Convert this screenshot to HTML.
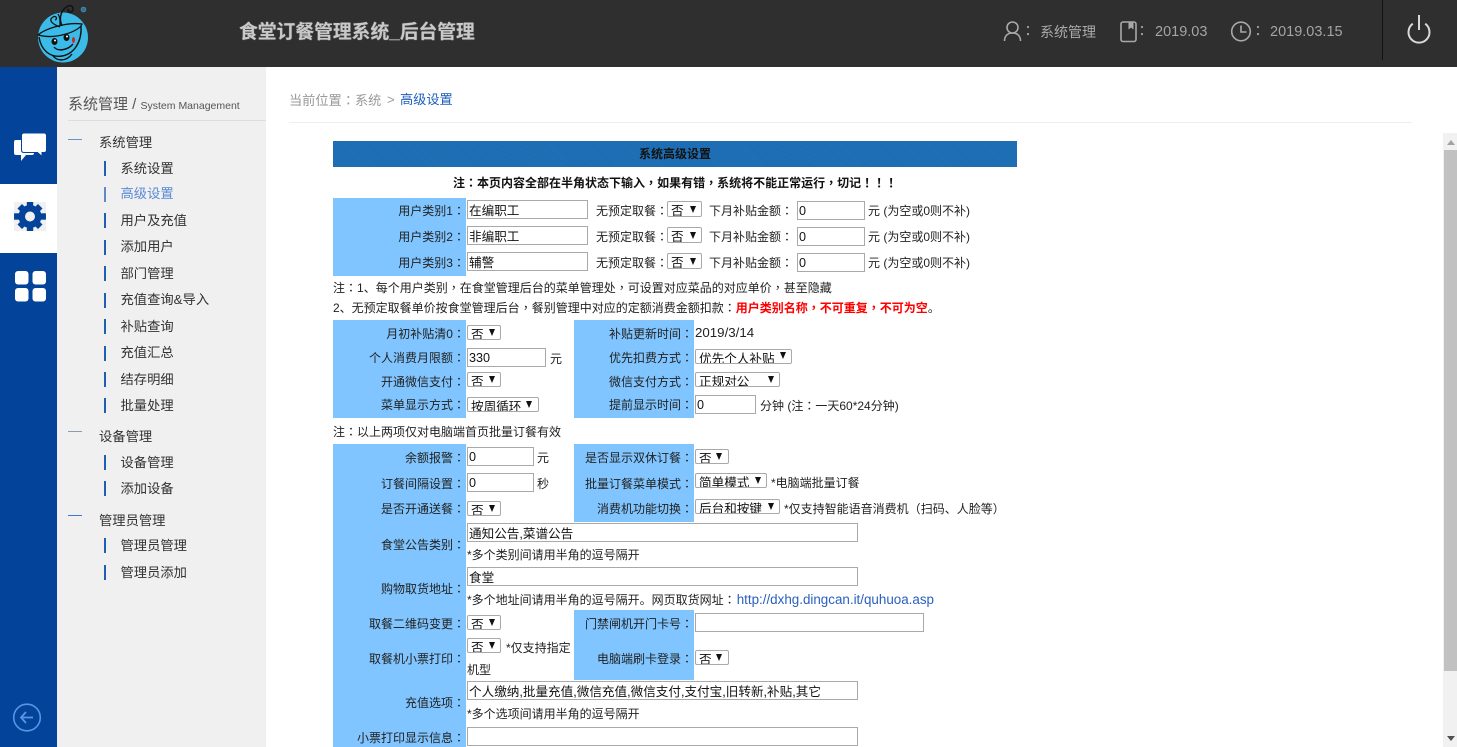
<!DOCTYPE html>
<html>
<head>
<meta charset="utf-8">
<title>食堂订餐管理系统_后台管理</title>
<style>
html,body{margin:0;padding:0;width:1457px;height:747px;overflow:hidden;background:#fff}
body{position:relative;font-family:"Liberation Sans","Noto Sans CJK SC",sans-serif;font-size:12px;color:#222}
s{text-decoration:none;font-family:"Noto Sans CJK TC",sans-serif}
.a{position:absolute}
.t{position:absolute;white-space:nowrap;line-height:16px;font-size:12px;margin-top:1px}
.r{position:absolute;white-space:nowrap;line-height:16px;font-size:12px;text-align:right;width:160px;margin-top:1px}
.p{position:absolute;background:#80c5ff}
input{position:absolute;box-sizing:border-box;border:1px solid #a9a9a9;padding:0 1px;margin:0;background:#fff;height:19px;font:12.6px "Liberation Sans","Noto Sans CJK SC",sans-serif;color:#111;outline:0;border-radius:0}
select{position:absolute;box-sizing:border-box;-webkit-appearance:none;appearance:none;border:1px solid #a9a9a9;border-radius:2px;padding:2px 0 0 3px;margin:0;background:transparent;height:15px;line-height:15px;font:12.6px "Liberation Sans","Noto Sans CJK SC",sans-serif;color:#111;outline:0}
.ar{position:absolute;width:0;height:0;border-left:3.5px solid transparent;border-right:3.5px solid transparent;border-top:7px solid #111}
.m1{position:absolute;left:99px;font-size:13.3px;line-height:18px;color:#333;white-space:nowrap;margin-top:1px}
.m2{position:absolute;left:120.5px;font-size:13.3px;line-height:18px;color:#333;white-space:nowrap;margin-top:1px}
.bar{position:absolute;left:104px;width:2px;height:15px;background:#1f5fb0}
.dash{position:absolute;left:68px;width:14px;height:1px;background:#6a90c8}
</style>
</head>
<body>
<!-- header -->
<div class="a" style="left:0;top:0;width:1457px;height:67px;background:#2f2f2f"></div>
<svg class="a" style="left:0;top:0" width="110" height="67" viewBox="0 0 110 67" fill="none">
<circle cx="63" cy="37.5" r="25" fill="#3bbce8"/>
<path d="M38 35C46 28 68 22 82 24C80 31 56 40 38 35Z" stroke="#111" stroke-width="1.300"/>
<path d="M39 37C41 50 50 58 62 56C74 54 82 42 81 26" stroke="#111" stroke-width="1.400"/>
<path d="M53 56C57 61 66 62 72 54" stroke="#111" stroke-width="1.400"/>
<path d="M60 27C52 24 48 20 53 17C56 15 58 19 55 20" stroke="#111" stroke-width="1.300"/>
<path d="M62 26C58 17 62 9 68 6C73 4 75 10 71 12C68 13 67 10 69 9" stroke="#111" stroke-width="1.500"/>
<path d="M60 25C60 20 60 17 58 14" stroke="#111" stroke-width="1.200"/>
<ellipse cx="54.500" cy="41.500" rx="3" ry="3.500" fill="#111"/>
<ellipse cx="66.500" cy="37.500" rx="3" ry="3.500" fill="#111"/>
<circle cx="55" cy="40.500" r="1" fill="#fff"/><circle cx="67" cy="36.500" r="1" fill="#fff"/>
<path d="M54 47C58 52 68 50 73 44" stroke="#111" stroke-width="1.400"/>
<ellipse cx="73.500" cy="40" rx="1.500" ry="3" fill="#d3212a"/>
<circle cx="83.500" cy="9.500" r="2.300" fill="#2f6f8c" stroke="#3d8db0" stroke-width="1"/>
</svg>
<div class="a" style="left:239px;top:18px;font-size:18.800px;line-height:28px;font-weight:bold;color:#c9c9c9;white-space:nowrap;text-shadow:0 0 1px #888">食堂订餐管理系统_后台管理</div>
<svg class="a" style="left:1000px;top:15px" width="440" height="34" viewBox="1000 15 440 34" fill="none" stroke="#a8a8a8" stroke-width="1.600">
<circle cx="1012.500" cy="27.500" r="5.500"/>
<path d="M1004.500 41C1004.500 35.500 1008 33 1012.500 33C1017 33 1020.500 35.500 1020.500 41"/>
<rect x="1121" y="22" width="15" height="19.500" rx="2"/>
<path d="M1129 22V28.500L1131 27L1133 28.500V22" fill="#a8a8a8" stroke-width="1"/>
<circle cx="1241" cy="31.500" r="9.300"/>
<path d="M1241 25.500V32H1246.500"/>
<path d="M1412.800 23.700A10.500 10.500 0 1 0 1425.200 23.700" stroke="#d8d8d8" stroke-width="2"/>
<path d="M1419 15V30" stroke="#d8d8d8" stroke-width="2"/>
</svg>
<div class="a" style="left:1382px;top:0;width:1px;height:60px;background:#111"></div>
<div class="t" style="left:1021px;top:22px;font-size:14px;color:#aaa"><s>：</s></div>
<div class="t" style="left:1040px;top:23px;font-size:14px;color:#aaa">系统管理</div>
<div class="t" style="left:1135px;top:22px;font-size:14px;color:#aaa"><s>：</s></div>
<div class="t" style="left:1155px;top:23px;font-size:14.500px;color:#a4a4a4">2019.03</div>
<div class="t" style="left:1251px;top:22px;font-size:14px;color:#aaa"><s>：</s></div>
<div class="t" style="left:1270px;top:23px;font-size:14.500px;color:#a4a4a4">2019.03.15</div>

<!-- left rail -->
<div class="a" style="left:0;top:67px;width:57px;height:680px;background:#03439a"></div>
<div class="a" style="left:0;top:184px;width:57px;height:69px;background:#fff"></div>
<svg class="a" style="left:0;top:67px" width="57" height="680" viewBox="0 67 57 680">
<path d="M16 140H32Q34 140 34 142V153Q34 155 32 155H26L21 161V155H16Q14 155 14 153V142Q14 140 16 140Z" fill="#fff"/>
<path d="M24 133H44Q46.500 133 46.500 135.500V150Q46.500 152.500 44 152.500H42V156.500L37.500 152.500H24Q21.500 152.500 21.500 150V135.500Q21.500 133 24 133Z" fill="#fff" stroke="#03439a" stroke-width="1"/>
<rect x="14" y="202" width="32" height="29" fill="#f0f0f0"/>
<g fill="#03439a" transform="translate(30 216.500)">
<circle r="11.500"/>
<rect x="-3.200" y="-14.500" width="6.400" height="29"/>
<rect x="-3.200" y="-14.500" width="6.400" height="29" transform="rotate(45)"/>
<rect x="-3.200" y="-14.500" width="6.400" height="29" transform="rotate(90) scale(1 1.100)"/>
<rect x="-3.200" y="-14.500" width="6.400" height="29" transform="rotate(135)"/>
<circle r="5" fill="#f0f0f0"/>
</g>
<rect x="15" y="271" width="13.500" height="13.500" rx="3" fill="#fff"/>
<rect x="32.500" y="271" width="13.500" height="13.500" rx="3" fill="#fff"/>
<rect x="15" y="288" width="13.500" height="13.500" rx="3" fill="#fff"/>
<rect x="32.500" y="288" width="13.500" height="13.500" rx="3" fill="#fff"/>
<circle cx="27" cy="717.500" r="13.300" fill="none" stroke="#5a95e5" stroke-width="1.600"/>
<path d="M33 717.500H21M26 712L21 717.500L26 723" fill="none" stroke="#5a95e5" stroke-width="1.800"/>
</svg>

<!-- side menu -->
<div class="a" style="left:57px;top:67px;width:209px;height:680px;background:#f0f0f0"></div>
<div class="a" style="left:68px;top:94px;font-size:15px;line-height:22px;color:#555;white-space:nowrap">系统管理 <span style="font-size:15px">/</span> <span style="font-size:10.500px">System Management</span></div>
<div class="a" style="left:68px;top:120px;width:198px;height:1px;background:#ddd"></div>

<div class="dash" style="top:139px"></div><div class="m1" style="top:133px">系统管理</div>
<div class="bar" style="top:161px"></div><div class="m2" style="top:159px">系统设置</div>
<div class="bar" style="top:187px;opacity:.7"></div><div class="m2" style="top:184px;color:#5b8bd6">高级设置</div>
<div class="bar" style="top:213px"></div><div class="m2" style="top:211px">用户及充值</div>
<div class="bar" style="top:240px"></div><div class="m2" style="top:237px">添加用户</div>
<div class="bar" style="top:266px"></div><div class="m2" style="top:264px">部门管理</div>
<div class="bar" style="top:293px"></div><div class="m2" style="top:290px">充值查询&amp;导入</div>
<div class="bar" style="top:319px"></div><div class="m2" style="top:317px">补贴查询</div>
<div class="bar" style="top:346px"></div><div class="m2" style="top:343px">充值汇总</div>
<div class="bar" style="top:372px"></div><div class="m2" style="top:370px">结存明细</div>
<div class="bar" style="top:398px"></div><div class="m2" style="top:396px">批量处理</div>
<div class="dash" style="top:431px;background:#8d9bb0"></div><div class="m1" style="top:427px">设备管理</div>
<div class="bar" style="top:455px"></div><div class="m2" style="top:453px">设备管理</div>
<div class="bar" style="top:481px"></div><div class="m2" style="top:479px">添加设备</div>
<div class="dash" style="top:515px;background:#3f78c8"></div><div class="m1" style="top:511px">管理员管理</div>
<div class="bar" style="top:538px"></div><div class="m2" style="top:536px">管理员管理</div>
<div class="bar" style="top:565px"></div><div class="m2" style="top:563px">管理员添加</div>

<!-- breadcrumb -->
<div class="a" style="left:289px;top:91px;font-size:13.200px;line-height:18px;color:#999;white-space:nowrap">当前位置<s>：</s>系统</div>
<div class="a" style="left:387px;top:91px;font-size:13.200px;line-height:18px;color:#999">&gt;</div>
<div class="a" style="left:400px;top:91px;font-size:13.200px;line-height:18px;color:#1d5fbb;white-space:nowrap">高级设置</div>
<div class="a" style="left:289px;top:122px;width:1123px;height:1px;background:#eee"></div>

<!-- scrollbar -->
<div class="a" style="left:1443px;top:133px;width:14px;height:614px;background:#f1f1f1"></div>
<div class="a" style="left:1444px;top:150px;width:13px;height:521px;background:#c1c1c1"></div>
<div class="a" style="left:1447px;top:140px;width:0;height:0;border-left:4px solid transparent;border-right:4px solid transparent;border-bottom:5px solid #a3a3a3"></div>
<div class="a" style="left:1447px;top:736px;width:0;height:0;border-left:4px solid transparent;border-right:4px solid transparent;border-top:5px solid #505050"></div>

<!-- form header -->
<div class="a" style="left:333px;top:141px;width:684px;height:26px;background-color:#186ab2;background-image:repeating-linear-gradient(45deg,rgba(255,255,255,.05) 0 1px,transparent 1px 2px)"></div>
<div class="t" style="left:639px;top:145px;font-weight:bold;color:#111">系统高级设置</div>
<div class="t" style="left:453px;top:174px;font-weight:bold;color:#111">注<s>：</s>本页内容全部在半角状态下输入<s>，</s>如果有错<s>，</s>系统将不能正常运行<s>，</s>切记<s>！！！</s></div>

<!-- blue panels -->
<div class="p" style="left:333px;top:198px;width:133px;height:78px"></div>
<div class="p" style="left:333px;top:320px;width:133px;height:98px"></div>
<div class="p" style="left:574px;top:320px;width:120px;height:98px"></div>
<div class="p" style="left:333px;top:444px;width:133px;height:303px"></div>
<div class="p" style="left:574px;top:444px;width:120px;height:78px"></div>
<div class="p" style="left:574px;top:610px;width:120px;height:70px"></div>

<!-- user types -->
<div class="r" style="left:305px;top:202px">用户类别1<s>：</s></div>
<div class="r" style="left:305px;top:228px">用户类别2<s>：</s></div>
<div class="r" style="left:305px;top:254px">用户类别3<s>：</s></div>
<input style="left:467px;top:200px;width:121px" value="在编职工">
<input style="left:467px;top:226px;width:121px" value="非编职工">
<input style="left:467px;top:252px;width:121px" value="辅警">
<div class="t" style="left:596px;top:202px">无预定取餐<s>：</s></div>
<div class="t" style="left:596px;top:228px">无预定取餐<s>：</s></div>
<div class="t" style="left:596px;top:254px">无预定取餐<s>：</s></div>
<select style="left:667px;top:201px;width:35px;height:16px"><option>否</option></select><i class="ar" style="left:690px;top:206px"></i>
<select style="left:667px;top:227px;width:35px;height:16px"><option>否</option></select><i class="ar" style="left:690px;top:232px"></i>
<select style="left:667px;top:253px;width:35px;height:16px"><option>否</option></select><i class="ar" style="left:690px;top:258px"></i>
<div class="t" style="left:709px;top:202px">下月补贴金额<s>：</s></div>
<div class="t" style="left:709px;top:228px">下月补贴金额<s>：</s></div>
<div class="t" style="left:709px;top:254px">下月补贴金额<s>：</s></div>
<input style="left:797px;top:201px;width:68px" value="0">
<input style="left:797px;top:227px;width:68px" value="0">
<input style="left:797px;top:253px;width:68px" value="0">
<div class="t" style="left:868px;top:202px">元 (为空或0则不补)</div>
<div class="t" style="left:868px;top:228px">元 (为空或0则不补)</div>
<div class="t" style="left:868px;top:254px">元 (为空或0则不补)</div>
<div class="t" style="left:333px;top:279px">注<s>：</s>1、每个用户类别<s>，</s>在食堂管理后台的菜单管理处<s>，</s>可设置对应菜品的对应单价<s>，</s>甚至隐藏</div>
<div class="t" style="left:333px;top:299px">2、无预定取餐单价按食堂管理后台<s>，</s>餐别管理中对应的定额消费金额扣款<s>：</s><b style="color:#f00">用户类别名称<s>，</s>不可重复<s>，</s>不可为空</b>。</div>

<!-- panel 2 -->
<div class="r" style="left:305px;top:325px">月初补贴清0<s>：</s></div>
<div class="r" style="left:305px;top:349px">个人消费月限额<s>：</s></div>
<div class="r" style="left:305px;top:373px">开通微信支付<s>：</s></div>
<div class="r" style="left:305px;top:396px">菜单显示方式<s>：</s></div>
<select style="left:467px;top:325px;width:34px"><option>否</option></select><i class="ar" style="left:489px;top:329px"></i>
<input style="left:467px;top:348px;width:79px" value="330">
<div class="t" style="left:550px;top:350px">元</div>
<select style="left:467px;top:372px;width:34px"><option>否</option></select><i class="ar" style="left:489px;top:376px"></i>
<select style="left:467px;top:397px;width:72px"><option>按周循环</option></select><i class="ar" style="left:526px;top:401px"></i>
<div class="r" style="left:533px;top:325px">补贴更新时间<s>：</s></div>
<div class="r" style="left:533px;top:349px">优先扣费方式<s>：</s></div>
<div class="r" style="left:533px;top:373px">微信支付方式<s>：</s></div>
<div class="r" style="left:533px;top:396px">提前显示时间<s>：</s></div>
<div class="t" style="left:695px;top:324px;font-size:13.300px">2019/3/14</div>
<select style="left:695px;top:349px;width:97px"><option>优先个人补贴</option></select><i class="ar" style="left:780px;top:352px"></i>
<select style="left:695px;top:372px;width:85px"><option>正规对公</option></select><i class="ar" style="left:768px;top:376px"></i>
<input style="left:695px;top:395px;width:61px" value="0">
<div class="t" style="left:760px;top:397px">分钟 (注<s>：</s>一天60*24分钟)</div>
<div class="t" style="left:333px;top:423px">注<s>：</s>以上两项仅对电脑端首页批量订餐有效</div>

<!-- panel 3 -->
<div class="r" style="left:305px;top:449px">余额报警<s>：</s></div>
<div class="r" style="left:305px;top:475px">订餐间隔设置<s>：</s></div>
<div class="r" style="left:305px;top:500px">是否开通送餐<s>：</s></div>
<input style="left:467px;top:447px;width:67px" value="0">
<div class="t" style="left:537px;top:449px">元</div>
<input style="left:467px;top:473px;width:67px" value="0">
<div class="t" style="left:537px;top:475px">秒</div>
<select style="left:467px;top:501px;width:34px"><option>否</option></select><i class="ar" style="left:489px;top:505px"></i>
<div class="r" style="left:533px;top:449px">是否显示双休订餐<s>：</s></div>
<div class="r" style="left:533px;top:475px">批量订餐菜单模式<s>：</s></div>
<div class="r" style="left:533px;top:500px">消费机功能切换<s>：</s></div>
<select style="left:695px;top:449px;width:34px"><option>否</option></select><i class="ar" style="left:716px;top:453px"></i>
<select style="left:695px;top:473px;width:72px"><option>简单模式</option></select><i class="ar" style="left:755px;top:477px"></i>
<div class="t" style="left:771px;top:474px">*电脑端批量订餐</div>
<select style="left:695px;top:499px;width:85px"><option>后台和按键</option></select><i class="ar" style="left:768px;top:503px"></i>
<div class="t" style="left:784px;top:500px">*仅支持智能语音消费机<s>（</s>扫码、人脸等<s>）</s></div>

<div class="r" style="left:305px;top:536px">食堂公告类别<s>：</s></div>
<input style="left:467px;top:523px;width:391px" value="通知公告,菜谱公告">
<div class="t" style="left:467px;top:546px">*多个类别间请用半角的逗号隔开</div>
<div class="r" style="left:305px;top:580px">购物取货地址<s>：</s></div>
<input style="left:467px;top:567px;width:391px" value="食堂">
<div class="t" style="left:467px;top:591px">*多个地址间请用半角的逗号隔开。网页取货网址<s>：</s><span style="color:#2a5fc0;font-size:13.400px;margin-left:1px">http://dxhg.dingcan.it/quhuoa.asp</span></div>
<div class="r" style="left:305px;top:615px">取餐二维码变更<s>：</s></div>
<select style="left:467px;top:615px;width:34px"><option>否</option></select><i class="ar" style="left:489px;top:619px"></i>
<div class="r" style="left:533px;top:615px">门禁闸机开门卡号<s>：</s></div>
<input style="left:695px;top:613px;width:229px">
<div class="r" style="left:305px;top:650px">取餐机小票打印<s>：</s></div>
<select style="left:467px;top:638px;width:34px"><option>否</option></select><i class="ar" style="left:489px;top:642px"></i>
<div class="t" style="left:506px;top:639px">*仅支持指定</div>
<div class="t" style="left:467px;top:661px">机型</div>
<div class="r" style="left:533px;top:650px">电脑端刷卡登录<s>：</s></div>
<select style="left:695px;top:650px;width:34px"><option>否</option></select><i class="ar" style="left:716px;top:654px"></i>
<div class="r" style="left:305px;top:694px">充值选项<s>：</s></div>
<input style="left:467px;top:681px;width:391px" value="个人缴纳,批量充值,微信充值,微信支付,支付宝,旧转新,补贴,其它">
<div class="t" style="left:467px;top:705px">*多个选项间请用半角的逗号隔开</div>
<div class="r" style="left:305px;top:729px">小票打印显示信息<s>：</s></div>
<input style="left:467px;top:727px;width:391px">
</body>
</html>
